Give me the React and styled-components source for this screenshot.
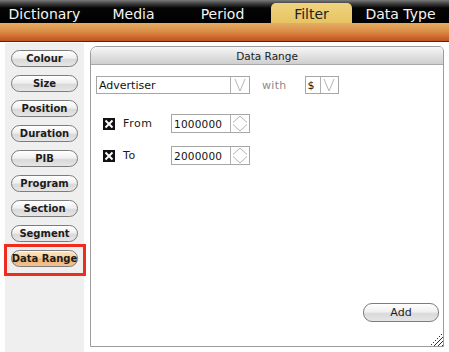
import React from "react";
import styled, { createGlobalStyle } from "styled-components";

const GlobalStyle = createGlobalStyle`
  html, body { margin: 0; padding: 0; background: #fff; }
  body { font-family: "DejaVu Sans", "Liberation Sans", sans-serif; }
  * { box-sizing: border-box; }
`;

const Page = styled.div`
  width: 449px;
  height: 352px;
  display: flex;
  flex-direction: column;
  overflow: hidden;
`;

const TabBar = styled.div`
  height: 23px;
  display: flex;
  background: linear-gradient(#7a7a7a 0px, #3a3a3a 4px, #050505 8px, #000 23px);
`;

const Tab = styled.div`
  width: 89px;
  display: flex;
  justify-content: center;
  align-items: flex-end;
  padding: 3px 4px 0;
`;

const TabFace = styled.div`
  flex: 1;
  height: 20px;
  display: flex;
  justify-content: center;
  align-items: center;
  font-size: 14px;
  white-space: nowrap;
  color: ${(p) => (p.$active ? "#222" : "#f4f4f4")};
  background: ${(p) => (p.$active ? "linear-gradient(#efd37e, #e6c463)" : "transparent")};
  border-radius: 5px 5px 0 0;
  padding-top: 1px;
`;

const Band = styled.div`
  height: 19px;
  background: linear-gradient(#e4ad62 0%, #dc8e48 45%, #c9622a 85%, #bf5220 100%);
  border-bottom: 1px solid #4a2a18;
`;

const Body = styled.div`
  flex: 1;
  display: flex;
  padding-left: 5px;
  min-height: 0;
`;

const Sidebar = styled.div`
  width: 79px;
  background: #efefef;
  margin-top: 1px;
  padding: 7px 0 0 6px;
  display: flex;
  flex-direction: column;
  align-items: flex-start;
  gap: 8px;
`;

const PillButton = styled.div`
  width: ${(p) => p.$w || 67}px;
  height: ${(p) => p.$h || 17}px;
  border: 1px solid #7c7c7c;
  border-radius: 9px;
  display: flex;
  align-items: center;
  justify-content: center;
  white-space: nowrap;
  font-size: ${(p) => p.$fs || 10}px;
  font-weight: ${(p) => p.$weight || 700};
  color: #1c1c1c;
  background: ${(p) =>
    p.$active
      ? "linear-gradient(#fde6c4 0%, #f6cf9c 45%, #ecb479 55%, #f1c28e 100%)"
      : "linear-gradient(#ffffff 0%, #f0f0f0 45%, #d9d9d9 58%, #e6e6e6 100%)"};
  box-shadow: inset 0 1px 0 rgba(255, 255, 255, 0.8);
  padding-bottom: 1px;
`;

const Highlight = styled.div`
  position: relative;
  &::after {
    content: "";
    position: absolute;
    left: -7px;
    right: -8px;
    top: -6px;
    bottom: -9px;
    border: 3px solid #ef2d1e;
  }
`;

const Main = styled.div`
  flex: 1;
  padding: 4px 5px 5px 6px;
  display: flex;
`;

const Panel = styled.div`
  flex: 1;
  position: relative;
  border: 1px solid #9c9c9c;
  border-radius: 7px 5px 0 0;
  display: flex;
  flex-direction: column;
`;

const PanelHeader = styled.div`
  height: 18px;
  border-bottom: 1px solid #a9a9a9;
  border-radius: 6px 4px 0 0;
  background: linear-gradient(#f7f7f7 0%, #e6e6e6 40%, #cfcfcf 100%);
  display: flex;
  align-items: center;
  justify-content: center;
  font-size: 10.5px;
  color: #222;
`;

const PanelBody = styled.div`
  flex: 1;
  display: flex;
  flex-direction: column;
  padding: 11px 4px 0 5px;
`;

const Row = styled.div`
  display: flex;
  align-items: center;
  margin-top: ${(p) => p.$mt || 0}px;
  padding-left: ${(p) => p.$pl || 0}px;
`;

const Combo = styled.div`
  display: flex;
  height: 18px;
  border: 1px solid #a6a6a6;
  background: #fff;
  margin-left: ${(p) => p.$ml || 0}px;
`;

const ComboText = styled.div`
  width: ${(p) => p.$w}px;
  font-size: 11px;
  color: #111;
  display: flex;
  align-items: center;
  padding-left: 2px;
  border-right: 1px solid #b0b0b0;
`;

const ComboArrow = styled.div`
  width: ${(p) => p.$w || 18}px;
  display: flex;
  align-items: center;
  justify-content: center;
`;

const Muted = styled.span`
  font-size: 11px;
  color: #8a8a8a;
  margin-left: ${(p) => p.$ml || 0}px;
  letter-spacing: 0.3px;
`;

const Label = styled.span`
  width: 48px;
  margin-left: 8px;
  font-size: 11px;
  color: #1a1a1a;
  letter-spacing: 0.6px;
`;

const Spinner = styled.div`
  display: flex;
  height: 19px;
  border: 1px solid #a6a6a6;
  background: #fff;
`;

const SpinnerText = styled.div`
  width: 59px;
  font-size: 10.5px;
  color: #111;
  display: flex;
  align-items: center;
  padding-left: 2px;
  border-right: 1px solid #b0b0b0;
  letter-spacing: 0.2px;
`;

const SpinnerArrows = styled.div`
  width: 18px;
  display: flex;
  align-items: center;
  justify-content: center;
`;

const Footer = styled.div`
  margin-top: auto;
  display: flex;
  justify-content: flex-end;
  padding-bottom: 24px;
`;

const Grip = styled.svg`
  position: absolute;
  right: 0;
  bottom: 0;
`;

const ChevronDown = () => (
  <svg width="14" height="14" viewBox="0 0 14 14">
    <path d="M2 1 L7 13 L12 1" fill="none" stroke="#b5b5b5" strokeWidth="1" />
  </svg>
);

const SpinIcon = () => (
  <svg width="16" height="17" viewBox="0 0 16 17">
    <path d="M1 7.5 L8 1 L15 7.5 M1 9.5 L8 16 L15 9.5" fill="none" stroke="#b0b0b0" strokeWidth="1" />
  </svg>
);

const CheckBox = () => (
  <svg width="12" height="12" viewBox="0 0 12 12">
    <rect x="0" y="0" width="12" height="12" fill="#111" />
    <path d="M2.5 2.5 L9.5 9.5 M9.5 2.5 L2.5 9.5" stroke="#fff" strokeWidth="2" />
  </svg>
);

const GripIcon = () => {
  const dots = [];
  for (let r = 0; r < 6; r++) {
    for (let c = 0; c < 6; c++) {
      if (c + r >= 5 && (c + r) % 2 === 1) {
        dots.push(<rect key={`${r}-${c}`} x={c * 2} y={r * 2} width="1" height="1" fill="#333" />);
      }
      if (c + r >= 5 && (c + r) % 2 === 0) {
        dots.push(<rect key={`b${r}-${c}`} x={c * 2 + 1} y={r * 2 + 1} width="1" height="1" fill="#333" />);
      }
    }
  }
  return (
    <Grip width="12" height="12" viewBox="0 0 12 12">
      {dots}
    </Grip>
  );
};

const tabs = ["Dictionary", "Media", "Period", "Filter", "Data Type"];
const sideItems = ["Colour", "Size", "Position", "Duration", "PIB", "Program", "Section", "Segment"];

export default function App() {
  return (
    <>
      <GlobalStyle />
      <Page>
        <TabBar>
          {tabs.map((t) => (
            <Tab key={t}>
              <TabFace $active={t === "Filter"}>{t}</TabFace>
            </Tab>
          ))}
        </TabBar>
        <Band />
        <Body>
          <Sidebar>
            {sideItems.map((s) => (
              <PillButton key={s}>{s}</PillButton>
            ))}
            <Highlight>
              <PillButton $active>Data Range</PillButton>
            </Highlight>
          </Sidebar>
          <Main>
            <Panel>
              <PanelHeader>Data Range</PanelHeader>
              <PanelBody>
                <Row>
                  <Combo>
                    <ComboText $w={134}>Advertiser</ComboText>
                    <ComboArrow $w={18}>
                      <ChevronDown />
                    </ComboArrow>
                  </Combo>
                  <Muted $ml={12}>with</Muted>
                  <Combo $ml={18}>
                    <ComboText $w={15}>$</ComboText>
                    <ComboArrow $w={17}>
                      <ChevronDown />
                    </ComboArrow>
                  </Combo>
                </Row>
                <Row $mt={20} $pl={7}>
                  <CheckBox />
                  <Label>From</Label>
                  <Spinner>
                    <SpinnerText>1000000</SpinnerText>
                    <SpinnerArrows>
                      <SpinIcon />
                    </SpinnerArrows>
                  </Spinner>
                </Row>
                <Row $mt={13} $pl={7}>
                  <CheckBox />
                  <Label>To</Label>
                  <Spinner>
                    <SpinnerText>2000000</SpinnerText>
                    <SpinnerArrows>
                      <SpinIcon />
                    </SpinnerArrows>
                  </Spinner>
                </Row>
                <Footer>
                  <PillButton $w={76} $h={19} $fs={11} $weight={400}>
                    Add
                  </PillButton>
                </Footer>
              </PanelBody>
              <GripIcon />
            </Panel>
          </Main>
        </Body>
      </Page>
    </>
  );
}
